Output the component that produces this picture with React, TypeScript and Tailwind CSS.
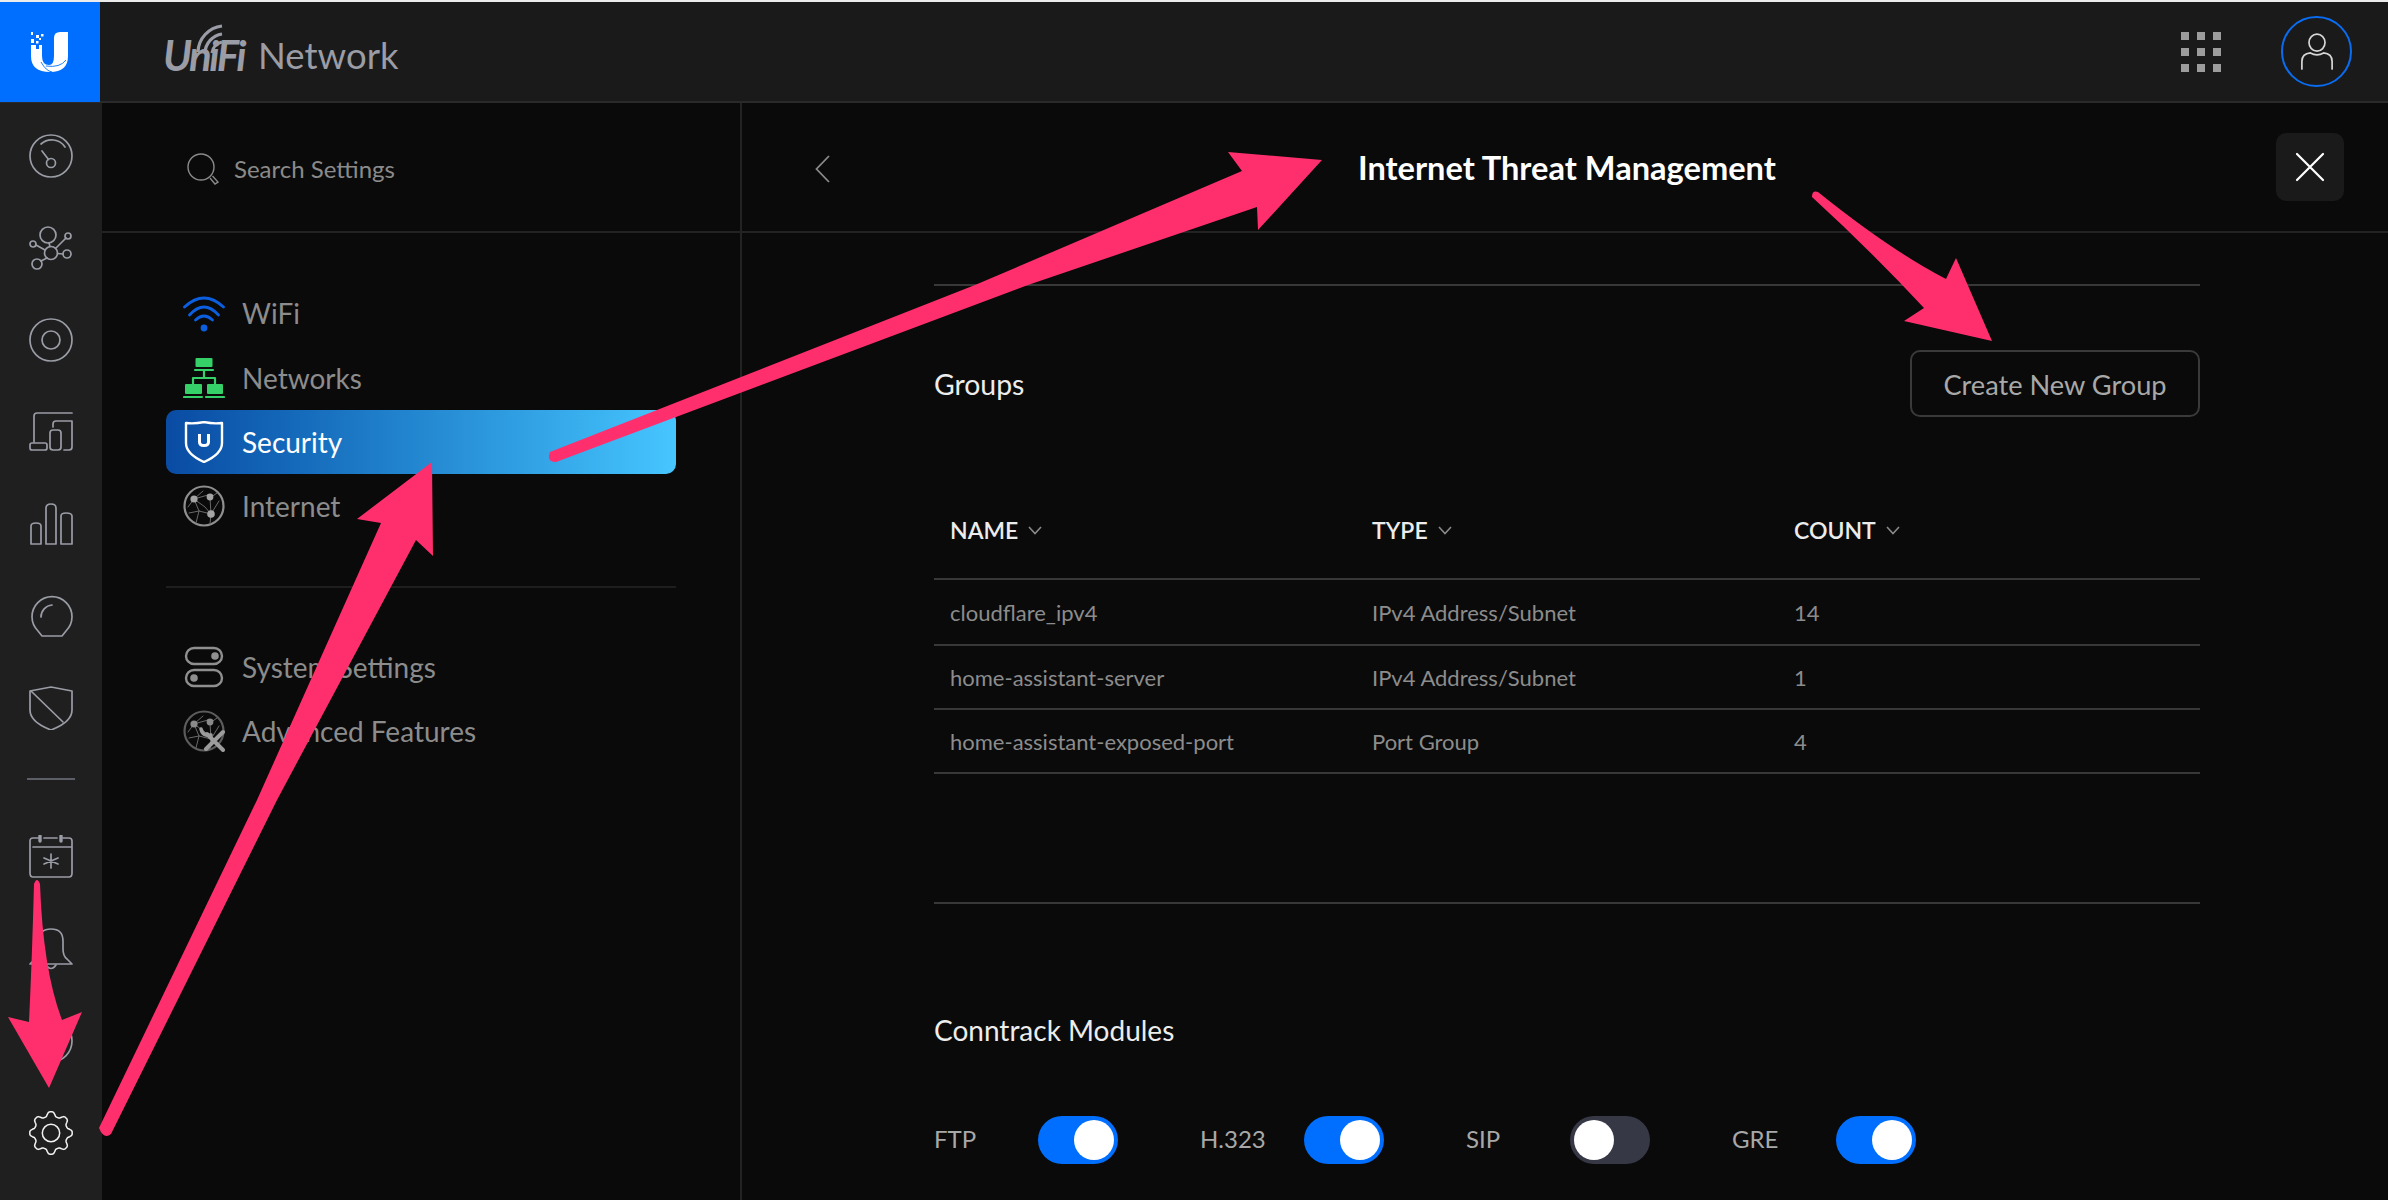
import React from "react";

const cogPath = (() => {
  const n = 8;
  const pts: string[] = [];
  const steps = 96;
  for (let i = 0; i <= steps; i++) {
    const a = (i / steps) * Math.PI * 2;
    const w = Math.cos(n * a);
    const r = 19 + 2.2 * Math.max(-1, Math.min(1, w * 1.5));
    pts.push(`${(22 + r * Math.sin(a)).toFixed(2)} ${(22 - r * Math.cos(a)).toFixed(2)}`);
  }
  return "M" + pts.join("L") + "Z";
})();

function SideIcon({ children, color = "#9a9ca6", width = "1.7" }: { children: React.ReactNode; color?: string; width?: string }) {
  return (
    <svg width="44" height="44" viewBox="0 0 44 44" fill="none" stroke={color} strokeWidth={width} strokeLinecap="round" strokeLinejoin="round" className="shrink-0">
      {children}
    </svg>
  );
}

function NavIcon({ children, color = "#8f8f8f" }: { children: React.ReactNode; color?: string }) {
  return (
    <svg width="42" height="42" viewBox="0 0 42 42" fill="none" stroke={color} strokeWidth="2" strokeLinecap="round" strokeLinejoin="round" className="shrink-0">
      {children}
    </svg>
  );
}

function Globe({ dim = false }: { dim?: boolean }) {
  return (
    <>
      <circle cx="21" cy="21" r="19.5" strokeWidth="2.2" stroke={dim ? "#5c5c5c" : "#8f8f8f"} />
      <g strokeWidth="1" stroke="#6a6a6a">
        <path d="M11 14 L20 6 M11 14 L25 10 M11 14 L16 26 L28 29 M27 13 L28 29 M11 14 L22 22 L28 29 M5 22 L11 14 M16 26 L6 28 M28 29 L36 16 M28 29 L27 39 M16 26 L13 38 M27 13 L34 8" />
      </g>
      <g fill={dim ? "#8a8a8a" : "#a4a4a4"} stroke="none">
        <circle cx="11" cy="14" r="3.6" />
        <circle cx="27" cy="12" r="3.4" />
        {!dim && <circle cx="28" cy="29" r="3.8" />}
      </g>
    </>
  );
}

function NavRow({ label, icon, active = false }: { label: string; icon: React.ReactNode; active?: boolean }) {
  return (
    <div
      className={
        active
          ? "flex h-[64px] items-center gap-[17px] rounded-[10px] bg-linear-to-r from-[#0a4ba3] to-[#46c6ff] pl-[17px] text-white"
          : "flex h-[64.5px] items-center gap-[17px] pl-[17px] text-[#8c8c8c]"
      }
    >
      {icon}
      <span className="text-[28px] leading-none">{label}</span>
    </div>
  );
}

function Toggle({ label, on }: { label: string; on: boolean }) {
  return (
    <div className="flex items-center">
      <span className="mb-[2px] w-[104px] text-[24px] text-[#a8a8a8]">{label}</span>
      <div className={on ? "flex h-[48px] w-[80px] items-center justify-end rounded-full bg-[#006fff] px-[4px]" : "flex h-[48px] w-[80px] items-center justify-start rounded-full bg-[#363846] px-[4px]"}>
        <div className="h-[40px] w-[40px] rounded-full bg-white" />
      </div>
    </div>
  );
}

const rows = [
  ["cloudflare_ipv4", "IPv4 Address/Subnet", "14"],
  ["home-assistant-server", "IPv4 Address/Subnet", "1"],
  ["home-assistant-exposed-port", "Port Group", "4"],
];

function HeadCell({ label }: { label: string }) {
  return (
    <div className="mt-[1px] flex items-center gap-[10px] text-[23px] font-semibold text-[#ececec]">
      {label}
      <svg width="14" height="9" viewBox="0 0 14 9" fill="none" stroke="#8a8a8a" strokeWidth="1.6">
        <path d="M1 1 L7 7.5 L13 1" />
      </svg>
    </div>
  );
}

export default function App() {
  return (
    <div className="relative flex h-[1200px] w-[2388px] flex-col overflow-hidden bg-[#0a0a0a] font-['Lato',sans-serif]">
      <div className="h-[2px] shrink-0 bg-[#ececec]" />

      {/* top bar */}
      <header className="flex h-[101px] shrink-0 items-stretch border-b-2 border-[#2a2a2a] bg-[#1a1a1a]">
        <div className="flex h-[100px] w-[100px] shrink-0 items-center justify-center bg-[#006fff]">
          <svg width="100" height="100" viewBox="0 0 100 100">
            <path fill="#fff" d="M31 43 H36 V47 H39 V43 H42 V54 Q42 63 49 63 Q54 63 54 54 V36 Q54 30 60 30 H68 V54 Q68 70 50 70 Q31 70 31 54 Z" />
            <g fill="#fff">
              <rect x="31" y="30" width="2" height="3" />
              <rect x="36" y="33" width="3" height="3" />
              <rect x="41" y="32" width="2.500" height="2.500" />
              <rect x="31" y="37" width="3" height="4" />
              <rect x="36" y="39" width="2.500" height="2.500" />
              <rect x="39" y="36" width="2" height="2" />
            </g>
            <path d="M41 60 Q46 69 52 70 M66 58 Q60 66 46 64" stroke="#006fff" strokeWidth="0.900" fill="none" />
          </svg>
        </div>
        <div className="flex flex-1 items-center pl-[63px] pr-[36px]">
          <div className="relative mt-[7px] flex items-center text-[#9a9ca6]">
            <span className="text-[42px] font-bold italic leading-none tracking-[-2.5px]">UniFi</span>
            <svg className="absolute left-[32px] top-[-12px]" width="34" height="34" viewBox="0 0 34 34" fill="none" stroke="#9a9ca6" strokeWidth="3.200">
              <path d="M3 30 A27 27 0 0 1 27 4" />
              <path d="M10 31 A20 20 0 0 1 27 12" />
              <path d="M17 31 A13 13 0 0 1 27 20" />
            </svg>
            <span className="ml-[14px] text-[36.500px] leading-none">Network</span>
          </div>
          <div className="ml-auto grid grid-cols-[8px_8px_8px] grid-rows-[8px_8px_8px] gap-[8px]">
            {Array.from({ length: 9 }).map((_, i) => (
              <div key={i} className="bg-[#9c9c9c]" />
            ))}
          </div>
          <div className="ml-[60px] flex h-[71px] w-[71px] items-center justify-center rounded-full border-2 border-[#0a6cf0]">
            <svg width="34" height="38" viewBox="0 0 36 40" fill="none" stroke="#d6d6d6" strokeWidth="1.800" strokeLinecap="round">
              <ellipse cx="18" cy="10" rx="8.500" ry="9" />
              <path d="M2 38 V30 Q2 22 11 21 Q18 25 25 21 Q34 22 34 30 V38" />
            </svg>
          </div>
        </div>
      </header>

      <div className="flex min-h-0 flex-1">
        {/* icon rail */}
        <aside className="flex w-[102px] shrink-0 flex-col items-center bg-[#1f1f1f] pt-[31px]">
          <div className="flex flex-col items-center gap-[48px]">
            <SideIcon>
              <circle cx="22" cy="22" r="21" />
              <path d="M12 10 A16 16 0 0 1 36 13" />
              <circle cx="22" cy="29" r="4.500" />
              <path d="M13 17 L19.500 25.500" />
            </SideIcon>
            <SideIcon>
              <circle cx="19" cy="9" r="8" />
              <circle cx="22" cy="27" r="6.500" />
              <circle cx="39" cy="10" r="3" />
              <circle cx="4" cy="18" r="3" />
              <circle cx="8" cy="38" r="5" />
              <circle cx="38" cy="28" r="4" />
              <path d="M20 17 L21 20.500 M27 22 L37 12 M7 19 L16 24 M12 35 L18 32 M28.500 27.500 L34 28" />
            </SideIcon>
            <SideIcon>
              <circle cx="22" cy="22" r="21" />
              <circle cx="22" cy="22" r="9" />
            </SideIcon>
            <SideIcon>
              <path d="M5 32 V6 Q5 3 8 3 H43" />
              <rect x="1" y="33" width="17" height="7" rx="2" />
              <rect x="21" y="20" width="11" height="20" rx="3" />
              <path d="M24 17 V14 Q24 11 27 11 H43 V37 Q43 40 40 40 H35" />
            </SideIcon>
            <SideIcon>
              <path d="M2 42 V24 Q2 21 7 21 Q12 21 12 24 V42 Z" />
              <path d="M17 42 V6 Q17 2 22 2 Q27 2 27 6 V42 Z" />
              <path d="M32 42 V14 Q32 11 37 11 Q43 11 43 14 V42 Z" />
            </SideIcon>
            <SideIcon>
              <path d="M13 42 H33 L37 37 A20 20 0 1 0 9 37 Z" />
              <path d="M12 23 A12 12 0 0 1 23 11" />
            </SideIcon>
            <SideIcon>
              <path d="M22 1 L43 5 V24 Q43 36 22 44 Q1 36 1 24 V5 Z" />
              <path d="M2 5 L34 36" />
            </SideIcon>
          </div>
          <div className="mt-[48px] h-[2px] w-[48px] shrink-0 bg-[#5c5e68]" />
          <div className="mt-[55px] flex flex-col items-center gap-[48px]">
            <SideIcon>
              <path d="M10 3 H4 Q1 3 1 6 V38 Q1 42 4 42 H40 Q43 42 43 38 V6 Q43 3 40 3 H34 M15 3 H28 M4 12 H43" />
              <path d="M11 1 V6 M32 1 V6" strokeWidth="3.400" />
              <path d="M22 19 V33 M15 23 L29 29 M29 23 L15 29" />
            </SideIcon>
            <SideIcon>
              <path d="M1 37 L6 32 Q10 29 10 22 V14 Q10 2 22 2 Q34 2 34 14 V22 Q34 29 38 32 L43 37 Z" />
              <path d="M17 38 Q22 45 27 38" />
            </SideIcon>
            <SideIcon>
              <circle cx="22" cy="22" r="21" />
            </SideIcon>
            <SideIcon color="#f2f2f2" width="1.500">
              <path d={cogPath} />
              <circle cx="22" cy="22" r="8.700" />
            </SideIcon>
          </div>
        </aside>

        {/* settings panel */}
        <nav className="flex w-[640px] shrink-0 flex-col border-r-2 border-[#232323]">
          <div className="flex h-[130px] shrink-0 items-center gap-[14px] border-b-2 border-[#232323] pl-[84px]">
            <svg width="34" height="34" viewBox="0 0 34 34" fill="none" stroke="#8a8a8a" strokeWidth="1.400" className="mt-[6px]">
              <circle cx="15" cy="14" r="13" />
              <path d="M24 25 L29 31 L32 29 L26.500 23" />
            </svg>
            <span className="mt-[3px] text-[24px] text-[#8a8a8a]">Search Settings</span>
          </div>
          <div className="flex flex-col px-[64px] pt-[48px]">
            <NavRow
              label="WiFi"
              icon={
                <NavIcon color="#0b5fe0">
                  <path d="M1.500 15 Q21 -3 40.500 15" strokeWidth="2.800" />
                  <path d="M6.500 23 Q21 7 35.500 23" strokeWidth="2.800" />
                  <path d="M12.500 28 Q21 20 29.500 28" strokeWidth="2.800" />
                  <circle cx="21" cy="36" r="3.400" fill="#0b5fe0" stroke="none" />
                </NavIcon>
              }
            />
            <NavRow
              label="Networks"
              icon={
                <NavIcon color="#36d068">
                  <g fill="#36d068" stroke="none">
                    <rect x="12.500" y="1" width="17" height="9" rx="1" />
                    <rect x="2" y="27" width="17" height="10" rx="1" />
                    <rect x="24" y="27" width="16" height="10" rx="1" />
                  </g>
                  <path d="M12 13 H30 M21 13 V21 M10 27 V21 H32 V27" strokeWidth="2.200" />
                  <path d="M1 40 H19 M23 40 H41" strokeWidth="2.200" />
                </NavIcon>
              }
            />
            <NavRow
              active
              label="Security"
              icon={
                <NavIcon color="#ffffff">
                  <path d="M21 1 Q30 3 39 2 V22 Q39 33 21 41 Q3 33 3 22 V2 Q12 3 21 1 Z" strokeWidth="2.400" />
                  <path d="M15 13 V21 Q15 26 21 26 Q27 26 27 21 V13 H24 V21 Q24 23 21 23 Q18 23 18 21 V13 Z" fill="#fff" stroke="none" />
                </NavIcon>
              }
            />
            <NavRow label="Internet" icon={<NavIcon><Globe /></NavIcon>} />
            <div className="my-[47px] h-[2px] bg-[#1e1e1e]" />
            <NavRow
              label="System Settings"
              icon={
                <NavIcon>
                  <rect x="3" y="2" width="36" height="16" rx="8" strokeWidth="2.400" />
                  <rect x="3" y="24" width="36" height="16" rx="8" strokeWidth="2.400" />
                  <circle cx="32" cy="10" r="3.800" fill="#8f8f8f" stroke="none" />
                  <circle cx="11" cy="32" r="3.800" fill="#8f8f8f" stroke="none" />
                </NavIcon>
              }
            />
            <NavRow
              label="Advanced Features"
              icon={
                <NavIcon>
                  <Globe dim />
                  <path d="M24 24 L40 40 M40 22 L23 39" stroke="#9c9c9c" strokeWidth="4" />
                  <path d="M18 19 Q20 27 28 25" stroke="#9c9c9c" strokeWidth="3.500" />
                </NavIcon>
              }
            />
          </div>
        </nav>

        {/* main */}
        <main className="flex min-w-0 flex-1 flex-col">
          <div className="flex h-[130px] shrink-0 items-center border-b-2 border-[#232323] pl-[73px] pr-[44px]">
            <svg width="15" height="28" viewBox="0 0 15 28" fill="none" stroke="#8a8a8a" strokeWidth="1.800" className="mt-[3px] shrink-0">
              <path d="M14 1 L1.500 14 L14 27" />
            </svg>
            <h1 className="ml-[528px] mt-[3px] text-[32.600px] font-bold leading-none text-white">Internet Threat Management</h1>
            <div className="ml-auto flex h-[68px] w-[68px] items-center justify-center rounded-[10px] bg-[#1a1a1a]">
              <svg width="30" height="30" viewBox="0 0 30 30" stroke="#fff" strokeWidth="2.200" strokeLinecap="round">
                <path d="M2 2 L28 28 M28 2 L2 28" />
              </svg>
            </div>
          </div>

          <div className="ml-[192px] flex w-[1266px] flex-col">
            <div className="mt-[51px] h-[2px] bg-[#383838]" />
            <div className="mt-[64px] flex items-center justify-between">
              <span className="mt-[2px] text-[28.400px] text-[#ededed]">Groups</span>
              <button className="flex h-[67px] w-[290px] items-center justify-center rounded-[10px] border-2 border-[#3a3a3a] pt-[3px] text-[27.200px] text-[#a8a8a8]">
                Create New Group
              </button>
            </div>
            <div className="mt-[65px] grid h-[96px] grid-cols-[422px_422px_1fr] items-center pb-[1px] pl-[16px]">
              <HeadCell label="NAME" />
              <HeadCell label="TYPE" />
              <HeadCell label="COUNT" />
            </div>
            {rows.map((r, i) => (
              <div key={i} className={(i === 0 ? "h-[66px] " : "h-[64px] ") + "grid grid-cols-[422px_422px_1fr] items-center border-t-2 border-[#383838] pl-[16px] text-[22px] text-[#8c8c8c]"}>
                <span>{r[0]}</span>
                <span>{r[1]}</span>
                <span>{r[2]}</span>
              </div>
            ))}
            <div className="h-[2px] bg-[#383838]" />
            <div className="mt-[128px] h-[2px] bg-[#383838]" />
            <div className="mt-[108px] text-[28px] leading-[36px] text-[#ededed]">Conntrack Modules</div>
            <div className="mt-[68px] grid grid-cols-[266px_266px_266px_266px]">
              <Toggle label="FTP" on />
              <Toggle label="H.323" on />
              <Toggle label="SIP" on={false} />
              <Toggle label="GRE" on />
            </div>
          </div>
        </main>
      </div>

      {/* annotation arrows */}
      <svg className="pointer-events-none absolute left-0 top-0" width="2388" height="1200" viewBox="0 0 2388 1200" fill="#ff2f6e">
        <path d="M99 1128 L257 800 L381 523 L357 519 L432 462 L433 556 L416 540 L277 800 L111 1134 Q104 1140 99 1128 Z" />
        <path d="M550 452 L975 285 L1242 171 L1228 152 L1322 160 L1258 230 L1257 207 L1028 285 L556 462 Q546 462 550 452 Z" />
        <path d="M34 884 Q37 876 40 884 Q43 970 62 1020 L82 1012 L49 1088 L8 1017 L29 1022 Q32 960 34 884 Z" />
        <path d="M1812 197 Q1812 190 1818 192 Q1890 250 1946 279 L1956 258 L1992 341 L1904 321 L1924 308 Q1870 250 1812 197 Z" />
      </svg>
    </div>
  );
}
